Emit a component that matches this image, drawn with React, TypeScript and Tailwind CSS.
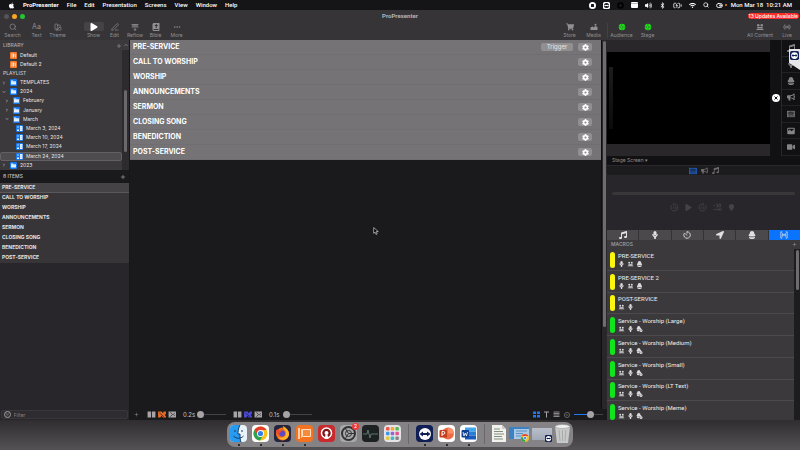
import React from "react";
import { FaApple, FaMusic, FaBullhorn, FaLocationArrow, FaShoppingCart, FaCog, FaPlay, FaVideo, FaWifi, FaVolumeUp, FaBluetoothB, FaBible, FaMapMarker } from "react-icons/fa";
import { Search, ChevronUp, ChevronRight, ChevronDown, Plus, PenLine, Ellipsis, SwatchBook, Radio, ListFilter, BatteryCharging, ToggleRight } from "lucide-react";

type IconType = React.ComponentType<{ className?: string }>;

function Mic({ className }: { className?: string }) {
  return (
    <svg viewBox="0 0 12 16" className={className} fill="currentColor">
      <rect x="3" y="0" width="6" height="9" rx="3" />
      <path d="M.5 6H3c0 5 6 5 6 0h2.500c0 3-1 5-3.500 5.800L7.500 16h-3L4 11.800C1.500 11 .5 9 .5 6z" />
    </svg>
  );
}

function Layers({ className }: { className?: string }) {
  return (
    <svg viewBox="0 0 16 16" className={className} fill="currentColor">
      <path d="M8 0c3 0 4.500 2 4.500 5L15 8.500c0 1.500-3 2.500-7 2.500S1 10 1 8.500L3.500 5C3.500 2 5 0 8 0z" />
      <path d="M2 11.500c3 1.500 9 1.500 12 0V13c-1 2-3 3-6 3s-5-1-6-3z" />
    </svg>
  );
}

function LayersGear({ className }: { className?: string }) {
  return (
    <svg viewBox="0 0 16 16" className={className} fill="currentColor">
      <path d="M6 0c3 0 4 2 4 4l3 3-2 2H1L0 7l2-3c0-2 1-4 4-4zM1 10h7l-1 4H4c-2 0-3-2-3-4z" />
      <circle cx="12" cy="12" r="4" />
      <circle cx="12" cy="12" r="1.200" fill="#3b393b" />
    </svg>
  );
}

function Audience({ className }: { className?: string }) {
  return (
    <svg viewBox="0 0 16 16" className={className} fill="currentColor">
      <circle cx="4.500" cy="4.500" r="2.500" />
      <circle cx="11.500" cy="4.500" r="2.500" />
      <path d="M3 8h10l1 2H2zM0 14l3-3h10l3 3z" />
    </svg>
  );
}

function MacroGlyph({ className }: { className?: string }) {
  return (
    <svg viewBox="0 0 18 16" className={className} fill="none" stroke="currentColor" strokeWidth="1.800">
      <path d="M5 1H2v14h3M13 1h3v14h-3M6 12V5l3 4 3-4v7" />
    </svg>
  );
}

function FilmStrip({ className }: { className?: string }) {
  return (
    <svg viewBox="0 0 16 16" className={className} fill="none" stroke="currentColor">
      <rect x="1" y="2.500" width="14" height="11" strokeWidth="1.500" />
      <path d="M3.500 3v10M12.500 3v10" strokeWidth="2.500" strokeDasharray="1.500 1" />
      <path d="M5 6h6M5 8.500h6M5 11h6" strokeWidth="1.200" />
    </svg>
  );
}

function Picture({ className }: { className?: string }) {
  return (
    <svg viewBox="0 0 16 16" className={className} fill="currentColor">
      <path fillRule="evenodd" d="M2 1.500h12q1.500 0 1.500 1.500v10q0 1.500-1.500 1.500H2Q.5 14.500.5 13V3Q.5 1.500 2 1.500zM2.500 8l3-3 3.500 3.500L13.500 5V3.500h-11z" />
    </svg>
  );
}

function Mountains({ className }: { className?: string }) {
  return (
    <svg viewBox="0 0 16 16" className={className} fill="currentColor">
      <path d="M1 14V9l4-2 3 2 2-3 5 2v6z" />
      <circle cx="11" cy="3.500" r="2" />
    </svg>
  );
}

function Countdown({ className }: { className?: string }) {
  return (
    <svg viewBox="0 0 16 16" className={className} fill="none" stroke="currentColor" strokeWidth="1.800">
      <path d="M8 1.500A6.500 6.500 0 1 1 3 4M8 1v4M8 9L4.500 5" />
    </svg>
  );
}

function Reflow({ className }: { className?: string }) {
  return (
    <svg viewBox="0 0 16 16" className={className} fill="none" stroke="currentColor" strokeWidth="1.600">
      <path d="M1 3h5v5H1M15 3h-5v5h5M6 3h4M8 3v12M5.500 12L8 15l2.500-3M2 5.500h3M11 5.500h3" />
    </svg>
  );
}

function ScreenStatus({ className }: { className?: string }) {
  return (
    <svg viewBox="0 0 16 16" className={className}>
      <circle cx="8" cy="8" r="6.500" fill="#1fdc1d" />
      <path d="M2 6.500l4 1.500-2 1.500M7.500 2v4L10 8l-2 2v4M10 8h4" fill="none" stroke="#217a20" strokeWidth="1.200" />
    </svg>
  );
}

function Skip({ className, back }: { className?: string; back?: boolean }) {
  return (
    <svg viewBox="0 0 18 18" className={className} fill="none" stroke="currentColor" strokeWidth="1.800">
      <path d={back ? "M4 4a7 7 0 1 0 5-2M9 0L6 2.500 9 5" : "M14 4a7 7 0 1 1-5-2M9 0l3 2.500L9 5"} />
      <path d="M7 7v5M10 7.500h2v4h-2z" strokeWidth="1.200" />
    </svg>
  );
}

function GoToEnd({ className }: { className?: string }) {
  return (
    <svg viewBox="0 0 18 18" className={className} fill="none" stroke="currentColor" strokeWidth="1.600">
      <path d="M1 5h3M6 2h3v6H6M12 2h3v6h-3zM1 13h13M11 10l3 3-3 3M16 10v6" />
    </svg>
  );
}

function FolderIcon() {
  return (
    <svg viewBox="0 0 14 14" className="size-[7px] shrink-0">
      <rect width="14" height="14" rx="2" fill="#1778ee" />
      <path d="M2 3h4l1 1.500h5V11H2z" fill="#e6f3ff" />
      <path d="M2 5.500h10" stroke="#9ccaff" />
    </svg>
  );
}

function PlaylistIcon() {
  return (
    <svg viewBox="0 0 14 14" className="size-[7px] shrink-0">
      <rect width="14" height="14" rx="2" fill="#1778ee" />
      <rect x="2" y="2" width="4" height="4" fill="#5aa8fb" />
      <path d="M8 2h5v10H8zM2 9h4v3H2z" fill="#e8f3ff" />
      <path d="M9 5h3M9 9h3" stroke="#8cc3ff" />
    </svg>
  );
}

function LibraryIcon() {
  return (
    <svg viewBox="0 0 14 14" className="size-[7px] shrink-0">
      <rect width="14" height="14" rx="2" fill="#f5792a" />
      <path d="M3 3h2v8H3zM6 3h2v8H6zM9 4l2-.5 1 7-2 .5z" fill="#ffe5d2" />
    </svg>
  );
}

function Tool({ icon: Icon, label, width, active }: { icon?: IconType; label: string; width: string; active?: boolean }) {
  return (
    <button className={`flex shrink-0 flex-col items-center gap-px text-[5px] leading-[7px] text-[#929092] ${width}`}>
      <span className={`flex h-[9px] items-center justify-center rounded-[2px] ${active ? "w-5 bg-[#454345] text-white" : "w-4"}`}>
        {Icon ? <Icon className="size-[8px]" /> : <span className="text-[7px]">Aa</span>}
      </span>
      {label}
    </button>
  );
}

const menus = ["File", "Edit", "Presentation", "Screens", "View", "Window", "Help"];

function MenuBar() {
  return (
    <header className="flex h-[10px] shrink-0 items-center justify-between bg-[#151416] font-['Roboto','Inter',sans-serif] text-[6px] leading-[8px] font-medium text-white">
      <nav className="flex items-center gap-[8px] pl-2">
        <FaApple className="size-[7px]" />
        <button className="font-bold">ProPresenter</button>
        {menus.map((m) => <button key={m}>{m}</button>)}
      </nav>
      <div className="flex items-center gap-[7px] pr-[8px]">
        <svg viewBox="0 0 14 14" className="size-[7px]"><circle cx="7" cy="7" r="7" fill="#fff" /><rect x="4" y="4" width="6" height="6" rx="1" fill="#151416" /></svg>
        <svg viewBox="0 0 14 14" className="size-[7px]"><rect width="14" height="14" rx="3" fill="#fff" /><circle cx="7" cy="7" r="5" fill="#151416" /><path d="M2 7l3-2v1h4V5l3 2-3 2V8H5v1z" fill="#fff" /></svg>
        <svg viewBox="0 0 14 14" className="size-[7px]"><circle cx="7" cy="7" r="5" fill="none" stroke="#000" strokeWidth="3" /></svg>
        <svg viewBox="0 0 14 12" className="h-[6px] w-[7px]"><rect width="14" height="12" rx="2" fill="#fff" /><path d="M0 3h14" stroke="#777" /></svg>
        <FaVolumeUp className="size-[7px]" />
        <FaBluetoothB className="size-[7px]" />
        <BatteryCharging className="size-[9px]" />
        <FaWifi className="size-[7px]" />
        <Search className="size-[6px]" strokeWidth={3} />
        <span className="flex items-center gap-[2px]"><ToggleRight className="size-[7px]" strokeWidth={3} /><i className="size-[2px] rounded-full bg-[#f28a1c]" /></span>
        <span className="-ml-[3px] whitespace-pre">Mon Mar 18  10:21 AM</span>
      </div>
    </header>
  );
}

function Toolbar() {
  return (
    <div className="flex h-[30px] shrink-0 flex-col bg-[#363436]">
      <div className="grid h-[12px] grid-cols-3 items-center">
        <div className="flex gap-[3px] pl-1">
          <i className="size-[5px] rounded-full bg-[#555355]" />
          <i className="size-[5px] rounded-full bg-[#f6a924]" />
          <i className="size-[5px] rounded-full bg-[#27c435]" />
        </div>
        <h1 className="text-center font-['Roboto','Inter',sans-serif] text-[6px] leading-[8px] font-bold text-[#b5b3b5]">ProPresenter</h1>
        <button className="mr-px justify-self-end rounded-full bg-[#fb2b27] px-px text-[5px] leading-[6px] font-medium text-white">13 Updates Available</button>
      </div>
      <div className="flex justify-between pr-[2px]">
        <div className="flex">
          <Tool icon={Search} label="Search" width="w-[25px]" />
          <Tool label="Text" width="w-[23px]" />
          <Tool icon={SwatchBook} label="Theme" width="w-[19px]" />
          <div className="w-[16px]" />
          <Tool icon={FaPlay} label="Show" width="w-[21px]" active />
          <Tool icon={PenLine} label="Edit" width="w-[21px]" />
          <Tool icon={Reflow} label="Reflow" width="w-[20px]" />
          <Tool icon={FaBible} label="Bible" width="w-[21px]" />
          <Tool icon={Ellipsis} label="More" width="w-[21px]" />
        </div>
        <div className="flex">
          <Tool icon={FaShoppingCart} label="Store" width="w-[23px]" />
          <Tool icon={Mountains} label="Media" width="w-[25px]" />
          <div className="my-px ml-px w-px bg-[#434143]" />
          <Tool icon={ScreenStatus} label="Audience" width="w-[27px]" />
          <Tool icon={ScreenStatus} label="Stage" width="w-[25px]" />
          <div className="w-[84px]" />
          <Tool icon={Audience} label="All Content" width="w-[32px]" />
          <Tool icon={Radio} label="Live" width="w-[22px]" />
        </div>
      </div>
    </div>
  );
}

const tree = [
  { label: "TEMPLATES", level: 0, open: false },
  { label: "2024", level: 0, open: true },
  { label: "February", level: 1, open: false },
  { label: "January", level: 1, open: false },
  { label: "March", level: 1, open: true },
  { label: "March 3, 2024", level: 2 },
  { label: "March 10, 2024", level: 2 },
  { label: "March 17, 2024", level: 2 },
  { label: "March 24, 2024", level: 2, selected: true },
  { label: "2023", level: 0, open: false },
];
const indent = ["pl-px", "pl-[4px]", "pl-[15px]"];
const items = ["PRE-SERVICE", "CALL TO WORSHIP", "WORSHIP", "ANNOUNCEMENTS", "SERMON", "CLOSING SONG", "BENEDICTION", "POST-SERVICE"];

function Sidebar() {
  return (
    <aside className="flex w-[130px] shrink-0 flex-col border-r border-[#171618] bg-[#28262a]">
      <div className="flex h-[130px] shrink-0 bg-[#3b393b]">
        <div className="flex min-w-0 flex-1 flex-col">
          <div className="flex h-[11px] shrink-0 items-center pl-[3px] text-[#a9a7a9]">
            <h2 className="flex-1 text-[5px] font-medium">LIBRARY</h2>
            <button aria-label="Add library"><Plus className="size-[6px]" /></button>
          </div>
          {["Default", "Default 2"].map((l) => (
            <button key={l} className="flex h-[9px] shrink-0 items-center gap-[3px] pl-[10px] text-[5px] leading-[7px] text-[#e9e7e9]"><LibraryIcon />{l}</button>
          ))}
          <h2 className="shrink-0 pl-[3px] text-[5px] leading-[9px] font-medium text-[#c5c3c5]">PLAYLIST</h2>
          <div className="grid min-h-0 flex-1 grid-rows-10">
            {tree.map((t) => (
              <button key={t.label} className={`flex min-h-0 items-center gap-[2px] text-[5px] leading-[7px] text-[#e9e7e9] ${indent[t.level]} ${t.selected ? "rounded-[2px] border border-[#626062] bg-[#4e4c4e]" : "border border-transparent"}`}>
                {t.level < 2 && (t.open ? <ChevronDown className="mr-[2px] size-[4px]" strokeWidth={3} /> : <ChevronRight className="mr-[2px] size-[4px]" strokeWidth={3} />)}
                {t.level < 2 ? <FolderIcon /> : <PlaylistIcon />}
                <span className="ml-px">{t.label}</span>
              </button>
            ))}
          </div>
        </div>
        <div className="flex w-[7px] flex-col items-center">
          <button aria-label="Collapse" className="flex h-[10px] items-center text-[#a9a7a9]"><ChevronUp className="size-[6px]" /></button>
          <div className="flex w-full flex-1 justify-center bg-[#2d2b2e] pt-10"><div className="h-[62px] w-[3px] rounded-full bg-[#6a686a]" /></div>
        </div>
      </div>
      <div className="flex h-[13px] shrink-0 items-center justify-between bg-[#1a191b] px-[3px] text-[5px] font-medium text-[#c5c3c5]">
        8 ITEMS<button aria-label="Add item"><Plus className="size-[6px]" /></button>
      </div>
      <ul className="bg-[#373538]">
        {items.map((t, i) => (
          <li key={t} className={`flex h-[10px] items-center pl-[2px] text-[5px] font-bold text-[#e6e4e6] ${i === 0 ? "border-b border-[#5a585a] bg-[#454346]" : ""}`}>{t}</li>
        ))}
      </ul>
      <label className="mx-px mt-auto mb-px flex h-[9px] items-center gap-[3px] rounded-[2px] border border-[#39373a] bg-[#2e2c30] pl-[2px] text-[#a09ea0]">
        <ListFilter className="size-[7px] rounded-full border border-[#a09ea0]" />
        <input aria-label="Filter" placeholder="Filter" className="w-full bg-transparent text-[5px] leading-[6px] outline-none placeholder:text-[#858385]" />
      </label>
    </aside>
  );
}

function Transition({ color, time, label }: { color: string; time: string; label: string }) {
  return (
    <div className="flex items-center gap-[2px]">
      <svg viewBox="0 0 66 16" className="h-[7px] w-[30px]" fill="#a6a4a6">
        <path d="M0 1h8v14H0zM10 1h8v14h-8zM48 1h17v14H48z" />
        <path d="M24 1h8l3 4 2-4h5v6l-3 2 3 3v3h-7l-3-4-3 4h-5z" fill={color} />
        <path d="M27 4l10 9M52 3l5 5-5 5M62 5l-3 3 3 3" stroke="#1a191b" strokeWidth="1.500" fill="none" />
      </svg>
      <span className="w-[16px] pl-[4px] text-[6px] text-[#c5c3c5]">{time}</span>
      <Slider label={label} fill="w-px" />
    </div>
  );
}

function Slider({ label, fill }: { label: string; fill: string }) {
  return (
    <label className="relative flex h-[7px] w-[29px] items-center">
      <input type="range" aria-label={label} className="absolute inset-0 w-full opacity-0" />
      <span className={`h-px bg-[#1f7bf2] ${fill}`} />
      <span className="-ml-px size-[7px] rounded-full bg-[#a6a4a6]" />
      <span className="h-px flex-1 bg-[#454346]" />
    </label>
  );
}

function Center() {
  return (
    <main className="flex min-w-0 flex-1 flex-col bg-[#1a191b]">
      <div className="flex min-h-0 flex-1">
        <div className="min-w-0 flex-1">
          <div className="bg-[#757375]">
            {items.map((t, i) => (
              <section key={t} className="flex h-[15px] items-center gap-[5px] border-b border-[#706e70] pr-[9px] pl-[3px]">
                <h2 className="flex-1 text-[7px] leading-[10px] font-bold text-white">{t}</h2>
                {i === 0 && <button className="h-[8px] w-8 rounded-[2px] bg-[#918f91] text-[6px] leading-[8px] text-[#e9e7e9]">Trigger</button>}
                <button aria-label={`${t} settings`} className="flex h-[8px] w-[14px] items-center justify-center rounded-[2px] bg-[#918f91] text-white"><FaCog className="size-[7px]" /></button>
              </section>
            ))}
          </div>
        </div>
        <div className="flex w-[6px] justify-center border-l border-[#0f0e10] bg-[#29272a] pt-px"><div className="h-[286px] w-[3px] rounded-full bg-[#6e6c6e]" /></div>
      </div>
      <footer className="flex h-[11px] shrink-0 items-center justify-between px-[4px]">
        <div className="flex items-center gap-[7px]">
          <Plus className="mr-px size-[5px] text-[#a6a4a6]" />
          <Transition color="#e56a26" time="0.2s" label="Slide transition" />
          <Transition color="#4b49d8" time="0.1s" label="Media transition" />
        </div>
        <div className="flex items-center gap-[4px] text-[#8a888a]">
          <svg viewBox="0 0 14 14" className="size-[7px]" fill="#2377ed"><rect y="1" width="6" height="5" /><rect x="8" y="1" width="6" height="5" /><rect y="8" width="6" height="5" /><rect x="8" y="8" width="6" height="5" /></svg>
          <svg viewBox="0 0 10 14" className="h-[7px] w-[5px]" stroke="#a6a4a6" strokeWidth="2"><path d="M0 2h10M5 2v11" /></svg>
          <svg viewBox="0 0 14 14" className="size-[7px]" stroke="#8a888a" strokeWidth="2"><path d="M1 2h12M1 5h12M1 8h12M1 11h12" /></svg>
          <svg viewBox="0 0 14 14" className="size-[6px]" fill="none" stroke="currentColor" strokeWidth="1.500"><circle cx="7" cy="7" r="6" /><path d="M4 7h6" /></svg>
          <Slider label="Zoom" fill="w-[14px]" />
        </div>
      </footer>
    </main>
  );
}

const macros = [
  { name: "PRE-SERVICE", yellow: true, icons: [Mic, Audience, Layers] },
  { name: "PRE-SERVICE 2", yellow: true, icons: [Mic, Audience, Layers] },
  { name: "POST-SERVICE", yellow: true, icons: [Audience, Mic] },
  ...["Large", "Medium", "Small", "LT Text", "Meme"].map((s) => ({ name: `Service - Worship (${s})`, yellow: false, icons: [Audience, Mic, LayersGear] })),
];
const rail: { icon: IconType; name: string }[] = [
  { icon: FaMusic, name: "audio" }, { icon: Mic, name: "messages" }, { icon: Layers, name: "props" }, { icon: FaBullhorn, name: "announcements" },
  { icon: FilmStrip, name: "slide" }, { icon: Picture, name: "media" }, { icon: FaVideo, name: "video input" },
];
const tabs: { icon: IconType; name: string }[] = [
  { icon: FaMusic, name: "Audio" }, { icon: Mic, name: "Stage" }, { icon: Countdown, name: "Timers" },
  { icon: FaLocationArrow, name: "Messages" }, { icon: Layers, name: "Props" }, { icon: MacroGlyph, name: "Macros" },
];

function TeamViewer({ className }: { className: string }) {
  return (
    <svg viewBox="0 0 16 16" className={className}>
      <rect width="16" height="16" rx="3" fill="#101f54" />
      <circle cx="8" cy="8" r="6" fill="#fff" />
      <path d="M2.500 8L6 5.500V7h4V5.500L13.500 8 10 10.500V9H6v1.500z" fill="#101f54" />
    </svg>
  );
}

function RightPanel() {
  return (
    <aside className="flex w-[193px] shrink-0 flex-col overflow-hidden bg-[#111012]">
      <div className="relative flex h-[116px] shrink-0">
        <div className="flex flex-1 flex-col bg-[#29272a] py-3">
          <div className="flex flex-1 items-center bg-black pl-[2px]"><div className="h-[62px] w-[4px] bg-linear-to-b from-[#1d1d1d] to-[#0b0b0b]" /></div>
        </div>
        <div className="flex w-[11px] items-center justify-center">
          <button aria-label="Clear all" className="size-[8px]">
            <svg viewBox="0 0 16 16"><circle cx="8" cy="8" r="8" fill="#fff" /><path d="M5 5l6 6M11 5l-6 6" stroke="#111" strokeWidth="2" /></svg>
          </button>
        </div>
        <div className="grid w-[19px] grid-rows-7 border-l border-[#29272a] text-[#858385]">
          {rail.map(({ icon: I, name }) => <button key={name} aria-label={`Clear ${name}`} className="flex items-center justify-center border-b border-[#222123]"><I className="size-[8px]" /></button>)}
        </div>
        <div className="absolute top-[9px] right-0 flex h-[21px] w-[11px] justify-center bg-[#e6e6ea] pt-[2px] [clip-path:polygon(0_0,100%_0,100%_100%,0_65%)]"><TeamViewer className="size-[9px]" /></div>
      </div>
      <select aria-label="Screen" className="ml-[5px] h-[9px] w-[40px] shrink-0 appearance-none bg-[#111012] text-[5px] text-[#8e8c8e]"><option>Stage Screen ▾</option></select>
      <div className="flex h-[11px] shrink-0 items-center justify-center gap-1 border-y border-[#29272a] bg-[#1c1b1d] text-[#6e6c6e]">
        <FilmStrip className="size-[8px] text-[#1f68d8]" /><FaBullhorn className="size-[7px]" /><FaMusic className="size-[7px]" />
      </div>
      <div className="flex h-[54px] shrink-0 flex-col bg-[#28262a] px-[5px] pt-[16px]">
        <div className="h-[3px] rounded-full bg-[#39373a]" />
        <div className="mt-[8px] flex items-center justify-center gap-[6px] pr-[2px] text-[#444246]">
          <Skip className="size-[9px]" back /><FaPlay className="size-[7px]" /><Skip className="size-[9px]" />
          <GoToEnd className="size-[9px]" /><FaMapMarker className="size-[7px]" />
        </div>
      </div>
      <div className="grid h-[10px] shrink-0 grid-cols-6 gap-px bg-[#343236] text-[#e2e0e2]">
        {tabs.map(({ icon: I, name }) => (
          <button key={name} aria-label={name} className={`flex items-center justify-center ${name === "Macros" ? "bg-[#0b74ff]" : "bg-[#4b494c]"}`}><I className="size-[8px]" /></button>
        ))}
      </div>
      <div className="flex min-h-0 flex-1 flex-col bg-[#3b393b]">
        <div className="flex h-[9px] shrink-0 items-center justify-between pr-[3px] pl-[4px] text-[5px] font-medium text-[#a5a3a5]">MACROS<Plus className="size-[5px]" /></div>
        <div className="flex min-h-0 flex-1 overflow-hidden">
          <ul className="grid h-[174px] flex-1 grid-rows-8">
            {macros.map((m) => (
              <li key={m.name} className="flex items-center gap-[3px] border-b border-[#4c4a4c] pt-px pl-[3px]">
                <i className={`h-4 w-[5px] rounded-full ${m.yellow ? "bg-[#fbf60e]" : "bg-[#10e61c]"}`} />
                <div>
                  <p className="font-['Roboto','Inter',sans-serif] text-[6px] leading-[8px] text-[#efedef]">{m.name}</p>
                  <div className="flex h-[8px] items-center gap-[2px] text-[#dddbdd]">{m.icons.map((I, i) => <I key={i} className="h-[6px] w-[7px]" />)}</div>
                </div>
              </li>
            ))}
          </ul>
          <div className="flex w-[6px] justify-center bg-[#1d1c1e] pt-px"><div className="h-10 w-[3px] rounded-full bg-[#6e6c6e]" /></div>
        </div>
      </div>
    </aside>
  );
}

function AppTile({ children, bg, running }: { children: React.ReactNode; bg: string; running?: boolean }) {
  return (
    <button className="relative flex shrink-0 items-center justify-center">
      <span className={`flex size-[17px] items-center justify-center overflow-hidden rounded-[4px] ${bg}`}>{children}</span>
      {running && <i className="absolute -bottom-[4px] size-[2px] rounded-full bg-[#111]" />}
    </button>
  );
}

const pads = ["#e95a4d", "#f7a633", "#58b957", "#3c98e8", "#9a64cf", "#e45292", "#e3c83c", "#43b6c5", "#878787"];

function Dock() {
  return (
    <footer className="flex h-[30px] shrink-0 justify-center bg-linear-to-b from-[#2f2d30] to-[#555255] pt-[2px]">
      <div className="flex h-[25px] items-center gap-[5px] rounded-lg bg-[#858385] px-[3px] pb-[2px]">
        <AppTile bg="bg-[#eaf3fa]" running>
          <svg viewBox="0 0 17 17"><path d="M0 0h10C8 4 8 7 8 9h2c0 3 0 6 1 8H0z" fill="#279af1" /><path d="M5 5v2M12 5v2M3.500 11c3 3 7 3 10 0M10 0C8 4 8 7 8 9h2c0 3 0 6 1 8" fill="none" stroke="#173d66" /></svg>
        </AppTile>
        <AppTile bg="bg-white" running>
          <svg viewBox="0 0 17 17"><circle cx="8.500" cy="8.500" r="7" fill="#f9c319" /><path d="M2.400 5A7 7 0 0 1 14.600 5H8.500l-3 5z" fill="#e63c2e" /><path d="M2.400 5A7 7 0 0 0 8 15.500l3.500-5.500-6-.5z" fill="#2ca350" /><circle cx="8.500" cy="8.500" r="3.500" fill="#fff" /><circle cx="8.500" cy="8.500" r="2.600" fill="#367fe8" /></svg>
        </AppTile>
        <AppTile bg="bg-[#24243c]" running><svg viewBox="0 0 17 17"><circle cx="8.500" cy="9" r="6.500" fill="#f26a1b" /><path d="M9 1c4 2 6 5 6 8a6 6 0 0 1-11 3c6 2 8-1 8-4S9 5 9 1z" fill="#fdb52c" /><circle cx="8" cy="8.500" r="3" fill="#5a48c9" /><path d="M2 5c3-1 4 1 6 2-2 0-3 1-3 3-2-1-3-3-3-5z" fill="#ef4a34" /></svg></AppTile>
        <AppTile bg="bg-[#f47320]" running><svg viewBox="0 0 17 17"><rect x="6" y="4" width="9" height="8" rx="1" fill="#ffe2c6" /><rect x="7" y="5" width="7" height="6" fill="#f58c3c" /><path d="M2 3h2v11H2zM5 4h1v9H5z" fill="#ffd0a8" /></svg></AppTile>
        <AppTile bg="bg-[#c92a2d]"><svg viewBox="0 0 17 17"><circle cx="8.500" cy="8" r="5" fill="#7e1417" stroke="#fff" strokeWidth="1.500" /><circle cx="8.500" cy="8" r="2" fill="#fff" /><path d="M6.500 14l1-4h2l1 4z" fill="#fff" /></svg></AppTile>
        <div className="relative">
          <AppTile bg="bg-[#a6a8ab]"><svg viewBox="0 0 17 17" fill="none" stroke="#333"><circle cx="8.500" cy="8.500" r="6.500" strokeWidth="2" /><circle cx="8.500" cy="8.500" r="3" /><path d="M8.500 8.500L5 3M8.500 8.500H15M8.500 8.500L5 14" /></svg></AppTile>
          <span className="absolute -top-[2px] -right-[2px] size-[7px] rounded-full bg-[#f03a38] text-center text-[5px] leading-[7px] text-white">2</span>
        </div>
        <AppTile bg="bg-[#1d2124]"><svg viewBox="0 0 17 17" fill="none" stroke="#5f776d"><path d="M1 9h4l1-4 2 8 1-4h7" /></svg></AppTile>
        <AppTile bg="bg-[#e4e4e6]"><svg viewBox="0 0 17 17">{pads.map((c, i) => <rect key={c} x={2 + (i % 3) * 4.7} y={2 + Math.floor(i / 3) * 4.7} width="3.500" height="3.500" rx="1" fill={c} />)}</svg></AppTile>
        <i className="mx-[2px] h-5 w-px bg-[#6a686a]" />
        <AppTile bg="bg-[#101f54]" running><TeamViewer className="size-[16px]" /></AppTile>
        <AppTile bg="bg-white" running><svg viewBox="0 0 17 17"><circle cx="10" cy="8.500" r="6" fill="#ed6c47" /><path d="M10 2.500a6 6 0 0 1 6 6h-6z" fill="#ff8f6b" /><rect x="1.500" y="5" width="7.500" height="7.500" rx="1" fill="#c43e1c" /><path d="M4 11V6.500h1.500a1.300 1.300 0 0 1 0 2.700H4" fill="none" stroke="#fff" /></svg></AppTile>
        <AppTile bg="bg-white" running><svg viewBox="0 0 17 17"><path d="M5 2.500h11v4H5z" fill="#41a5ee" /><path d="M5 6.500h11v4H5z" fill="#2b7cd3" /><path d="M5 10.500h11v4H5z" fill="#185abd" /><rect x="1.500" y="5" width="7.500" height="7.500" rx="1" fill="#103f91" /><path d="M3 7l1 4 1.200-3L6.500 11l1-4" fill="none" stroke="#fff" strokeWidth=".8" /></svg></AppTile>
        <i className="mx-[2px] h-5 w-px bg-[#6a686a]" />
        <div className="flex items-center gap-[3px]">
          <svg viewBox="0 0 14 17" className="h-[17px] w-[14px]"><path d="M0 0h10l4 4v13H0z" fill="#f1f1ee" /><path d="M10 0v4h4" fill="#c9c9c9" /><path d="M2 4h6M2 6.500h9M2 9h10M2 11.500h8M2 14h9" stroke="#83907f" /></svg>
          <svg viewBox="0 0 20 17" className="h-[17px] w-[20px]"><rect y="2" width="20" height="12" fill="#a9c9e6" /><path d="M0 2h20v2H0zM0 4h5v10H0z" fill="#3a82c4" /><path d="M7 6h11M7 8.500h7M7 11h6" stroke="#5c8fbe" /><circle cx="16" cy="13" r="4" fill="#f5be26" /><path d="M12.500 11a4 4 0 0 1 7 0z" fill="#df4436" /><path d="M12 12a4 4 0 0 0 4 5v-4z" fill="#35a553" /><circle cx="16" cy="13" r="1.600" fill="#3d7fe6" stroke="#fff" strokeWidth=".6" /></svg>
          <div className="flex h-[17px] w-[20px] items-end justify-end bg-linear-to-b from-[#b9c0cc] to-[#a2a9b6] bg-[length:20px_12px] bg-center bg-no-repeat"><TeamViewer className="size-[7px]" /></div>
          <svg viewBox="0 0 15 19" className="h-[19px] w-[15px]"><path d="M0 2h15l-2 17H2z" fill="#c8cac9" /><ellipse cx="7.500" cy="2.500" rx="7" ry="2" fill="#eef0ef" stroke="#999" strokeWidth=".6" /><path d="M4 6l1 11M7.500 6v11M11 6l-1 11" stroke="#a9abaa" /></svg>
        </div>
      </div>
    </footer>
  );
}

export default function App() {
  return (
    <div className="relative flex h-screen flex-col overflow-hidden bg-[#464346] font-['Inter','Liberation_Sans',sans-serif]">
      <MenuBar />
      <Toolbar />
      <div className="flex min-h-0 flex-1">
        <Sidebar />
        <Center />
        <RightPanel />
      </div>
      <Dock />
      <svg viewBox="0 0 10 14" className="absolute top-[227px] left-[373px] h-[8px] w-[6px]"><path d="M1 1v10l2.500-2L5 13l2-1-1.500-4H9z" fill="#000" stroke="#fff" /></svg>
    </div>
  );
}
